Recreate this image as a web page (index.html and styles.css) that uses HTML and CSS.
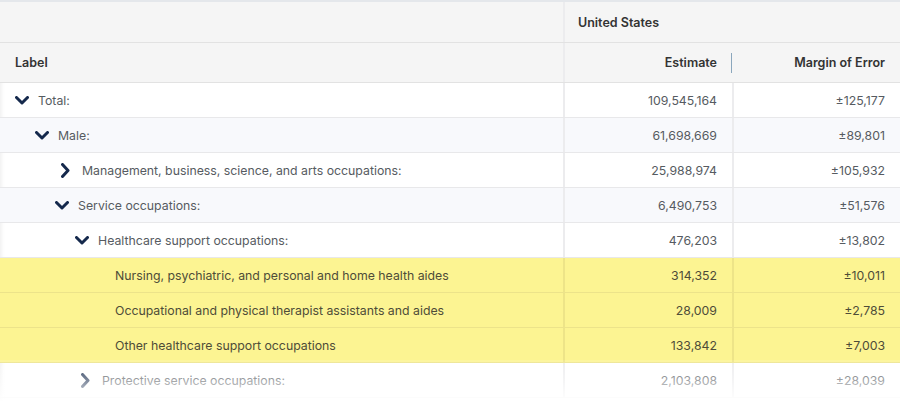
FILE: index.html
```html
<!DOCTYPE html>
<html>
<head>
<meta charset="utf-8">
<link rel="stylesheet" href="styles.css">
</head>
<body>
<div class="table">
  <div class="row head1">
    <div class="cell"></div>
    <div class="cell span2">United States</div>
  </div>
  <div class="row head2">
    <div class="cell">Label</div>
    <div class="cell num est-head">Estimate<span class="resizer"></span></div>
    <div class="cell num">Margin of Error</div>
  </div>

  <div class="row">
    <div class="cell label l0"><span class="chev"><svg width="14" height="9" viewBox="0 0 14 9"><path d="M1.5 1.5 L7 7 L12.5 1.5"/></svg></span>Total:</div>
    <div class="cell num">109,545,164</div>
    <div class="cell num">±125,177</div>
  </div>
  <div class="row alt">
    <div class="cell label l1"><span class="chev"><svg width="14" height="9" viewBox="0 0 14 9"><path d="M1.5 1.5 L7 7 L12.5 1.5"/></svg></span>Male:</div>
    <div class="cell num">61,698,669</div>
    <div class="cell num">±89,801</div>
  </div>
  <div class="row">
    <div class="cell label l2"><span class="chev right"><svg width="9" height="15" viewBox="0 0 9 15"><path d="M1.5 1.5 L7 7.5 L1.5 13.5"/></svg></span>Management, business, science, and arts occupations:</div>
    <div class="cell num">25,988,974</div>
    <div class="cell num">±105,932</div>
  </div>
  <div class="row alt">
    <div class="cell label l2"><span class="chev"><svg width="14" height="9" viewBox="0 0 14 9"><path d="M1.5 1.5 L7 7 L12.5 1.5"/></svg></span>Service occupations:</div>
    <div class="cell num">6,490,753</div>
    <div class="cell num">±51,576</div>
  </div>
  <div class="row">
    <div class="cell label l3"><span class="chev"><svg width="14" height="9" viewBox="0 0 14 9"><path d="M1.5 1.5 L7 7 L12.5 1.5"/></svg></span>Healthcare support occupations:</div>
    <div class="cell num">476,203</div>
    <div class="cell num">±13,802</div>
  </div>
  <div class="row hl">
    <div class="cell label l4">Nursing, psychiatric, and personal and home health aides</div>
    <div class="cell num">314,352</div>
    <div class="cell num">±10,011</div>
  </div>
  <div class="row hl">
    <div class="cell label l4">Occupational and physical therapist assistants and aides</div>
    <div class="cell num">28,009</div>
    <div class="cell num">±2,785</div>
  </div>
  <div class="row hl">
    <div class="cell label l4">Other healthcare support occupations</div>
    <div class="cell num">133,842</div>
    <div class="cell num">±7,003</div>
  </div>
  <div class="row">
    <div class="cell label l3"><span class="chev right"><svg width="9" height="15" viewBox="0 0 9 15"><path d="M1.5 1.5 L7 7.5 L1.5 13.5"/></svg></span>Protective service occupations:</div>
    <div class="cell num">2,103,808</div>
    <div class="cell num">±28,039</div>
  </div>
  <div class="fade"></div>
</div>
</body>
</html>
```

FILE: styles.css
```css
html, body {
  margin: 0;
  padding: 0;
  background: #ffffff;
}
body {
  font-family: Inter, "Noto Sans", "Liberation Sans", sans-serif;
  font-size: 12.3px;
  color: #565b61;
  overflow: hidden;
  height: 401px;
}
.table {
  position: relative;
  height: 399px;
  overflow: hidden;
  border-top: 2px solid #e4e7eb;
  box-shadow: inset 4px 0 4px -3px rgba(0,0,0,0.08);
}
.row {
  display: grid;
  grid-template-columns: 565px 169px 1fr;
  height: 34px;
  border-bottom: 1px solid #e8e8ea;
}
.cell {
  display: flex;
  align-items: center;
  padding: 0 15px;
  border-right: 2px solid #ececee;
  white-space: nowrap;
  overflow: hidden;
}
.cell:last-child {
  border-right: none;
}
.head1, .head2 {
  background: #f5f5f5;
  color: #333;
  font-weight: 600;
  font-size: 12.5px;
  border-bottom: 1px solid #e2e2e2;
}
.head1 {
  height: 40px;
}
.head2 {
  height: 39px;
}
.span2 {
  grid-column: 2 / 4;
  border-right: none;
  padding-left: 13px;
}
.num {
  justify-content: flex-end;
}
.est-head {
  position: relative;
  border-right-color: transparent;
}
.resizer {
  position: absolute;
  right: 0;
  top: 10px;
  width: 1px;
  height: 20px;
  background: #8ba7bd;
}
.alt {
  background: #f8f9fc;
}
.hl {
  background: #fcf492;
  color: #4e4c38;
  border-bottom-color: #ece38a;
}
.hl .cell {
  border-right-color: #ede488;
}
.chev {
  display: inline-flex;
  align-items: center;
  justify-content: center;
  width: 14px;
  margin-right: 9px;
}
.chev.right {
  width: 20px;
  margin-right: 7px;
}
.chev svg path {
  fill: none;
  stroke: #15294c;
  stroke-width: 3;
  stroke-linecap: round;
  stroke-linejoin: round;
}
.l0 { padding-left: 15px; }
.l1 { padding-left: 35px; }
.l2 { padding-left: 55px; }
.l3 { padding-left: 75px; }
.l4 { padding-left: 115px; }
.fade {
  position: absolute;
  left: 0;
  right: 0;
  top: 358px;
  height: 41px;
  background: linear-gradient(to bottom, rgba(255,255,255,0.1) 0%, rgba(255,255,255,0.4) 45%, rgba(255,255,255,0.95) 100%);
  pointer-events: none;
}
```
